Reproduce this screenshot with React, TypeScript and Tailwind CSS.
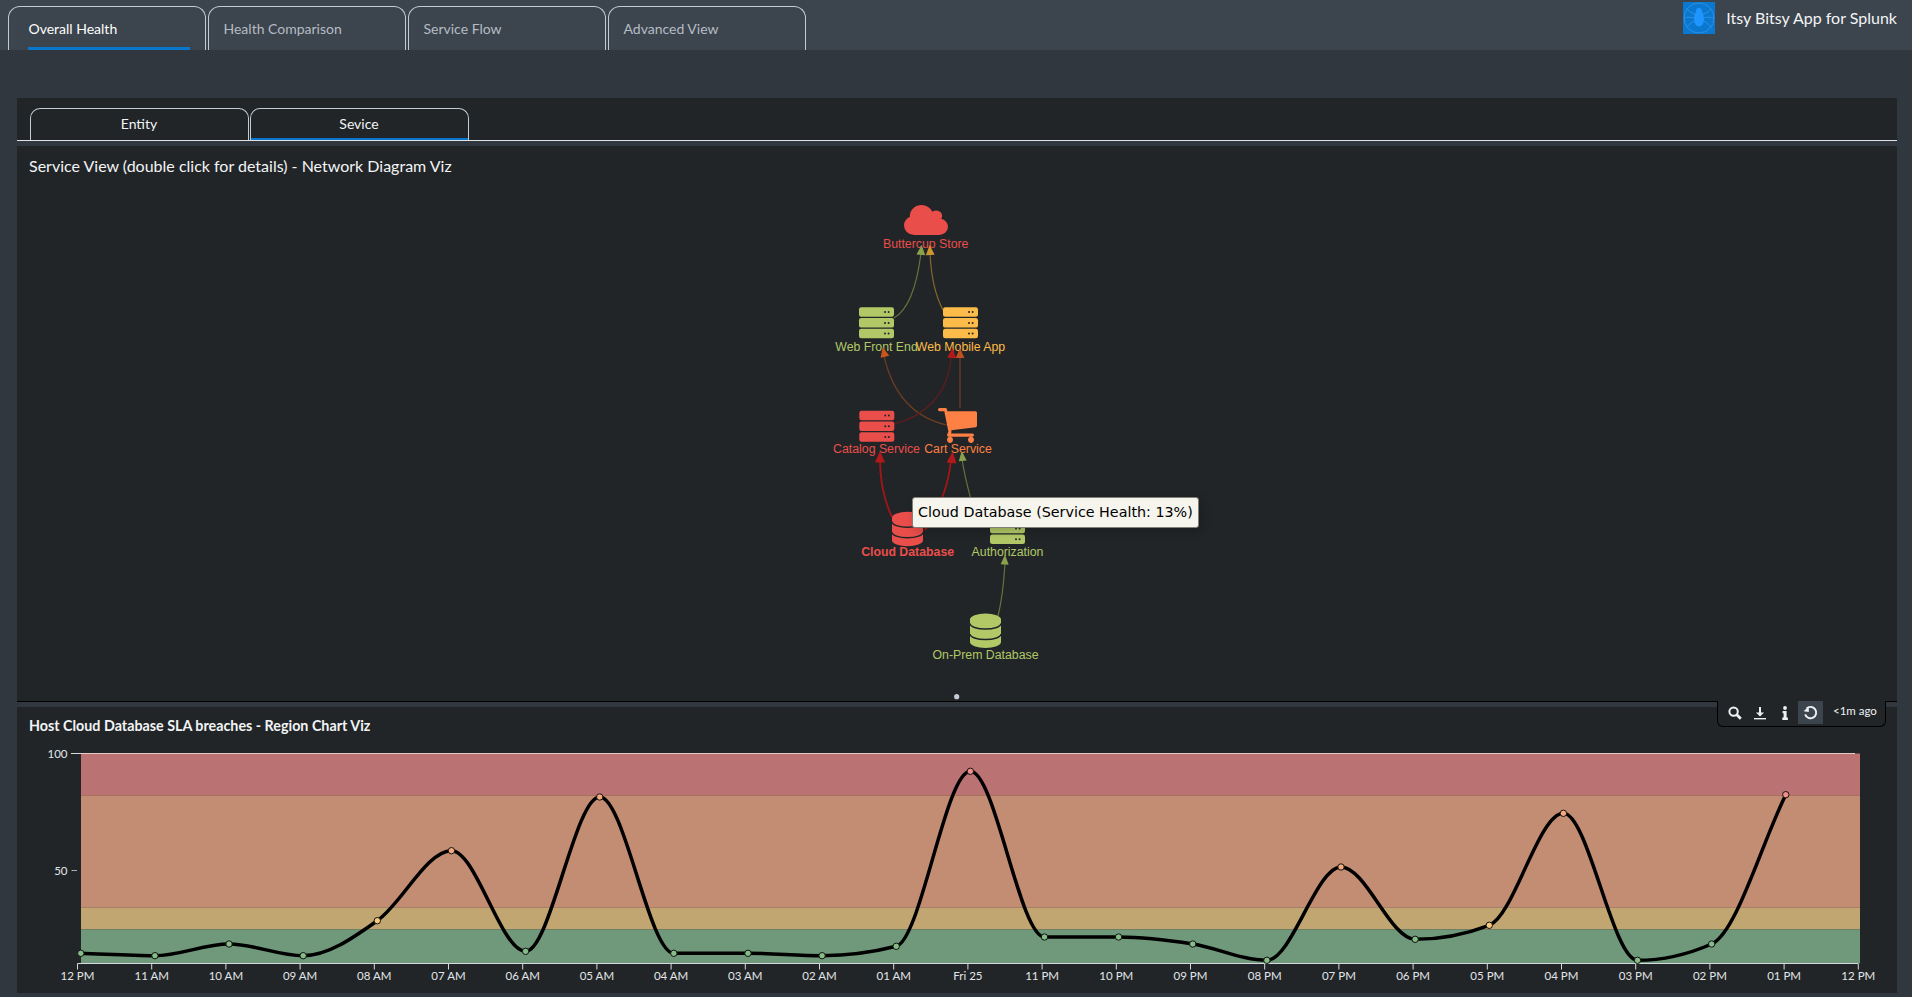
import React from 'react';

const mainTabs = ['Overall Health', 'Health Comparison', 'Service Flow', 'Advanced View'];

const GREEN = '#b2c867';
const AMBER = '#fdbb4a';
const RED = '#e94e4b';
const ORANGE = '#fd8044';

// chart data, y is in page pixels
const hours = ['12 PM', '11 AM', '10 AM', '09 AM', '08 AM', '07 AM', '06 AM', '05 AM', '04 AM', '03 AM', '02 AM', '01 AM', 'Fri 25', '11 PM', '10 PM', '09 PM', '08 PM', '07 PM', '06 PM', '05 PM', '04 PM', '03 PM', '02 PM', '01 PM', '12 PM'];
const points = [953.3, 955.7, 944, 955.7, 920.7, 850.7, 951.3, 797, 953.3, 953.3, 955.7, 946.3, 771.3, 937, 937, 944, 960.3, 867, 939.3, 925.3, 813.3, 960.3, 944, 794.7];

const pointX = (i: number) => 80.8 + 74.13 * i;

const pointColor = (y: number) => {
  if (y < 796) return '#f08f8a';
  if (y < 907) return '#f5a97f';
  if (y < 930) return '#f6c97c';
  return '#86bd86';
};

// monotone x spline, same idea as d3.curveMonotoneX
const splinePath = (ys: number[]) => {
  const h = pointX(1) - pointX(0);
  const slopes = ys.slice(1).map((y, i) => (y - ys[i]) / h);
  const tangents = ys.map((_, i) => {
    if (i === 0) return (3 * slopes[0] - (slopes[0] + slopes[0]) / 2) / 2;
    if (i === ys.length - 1) return slopes[i - 1];
    const a = slopes[i - 1];
    const b = slopes[i];
    if (a * b <= 0) return 0;
    return ((a < 0 ? -1 : 1) * 2) * Math.min(Math.abs(a), Math.abs(b), Math.abs(a + b) / 4);
  });
  let d = `M${pointX(0)} ${ys[0]}`;
  for (let i = 0; i < ys.length - 1; i++) {
    const x0 = pointX(i);
    const x1 = pointX(i + 1);
    d += ` C${x0 + h / 3} ${ys[i] + (tangents[i] * h) / 3} ${x1 - h / 3} ${ys[i + 1] - (tangents[i + 1] * h) / 3} ${x1} ${ys[i + 1]}`;
  }
  return d;
};

const edges = [
  { d: 'M894 318 C908 310 917 285 921 253', line: '#65753a', head: '#8aa24e', tip: [921.7, 245], angle: 5, w: 1.2, hw: 4.4, hh: 10 },
  { d: 'M943 310 C935 295 931 275 930 253', line: '#83672c', head: '#cf962f', tip: [929.7, 245], angle: -3, w: 1.2, hw: 4.4, hh: 10 },
  { d: 'M947 425 C915 418 893 395 884 356', line: '#6f3c24', head: '#c9551f', tip: [882.7, 347], angle: -13, w: 1.2, hw: 4.4, hh: 10 },
  { d: 'M894 424 C925 416 948 395 951 357', line: '#641c1d', head: '#b21a1a', tip: [952.7, 348], angle: 6, w: 1.2, hw: 4.4, hh: 10 },
  { d: 'M960 408 L960 357', line: '#6a3a26', head: '#bf4f20', tip: [960, 348], angle: 0, w: 1.4, hw: 4.4, hh: 10 },
  { d: 'M892 517 C884 500 880 480 880 460', line: '#a31616', head: '#b01a1a', tip: [880, 451], angle: 0, w: 1.8, hw: 5, hh: 11.5 },
  { d: 'M925 530 C938 510 948 490 951 460', line: '#a31616', head: '#b01a1a', tip: [952.7, 451.5], angle: 6, w: 1.8, hw: 5, hh: 11.5 },
  { d: 'M975 515 C970 495 965 480 962 459', line: '#65753a', head: '#8aa24e', tip: [961.7, 451], angle: -6, w: 1.2, hw: 4, hh: 10 },
  { d: 'M998 616 C1002 600 1004 580 1005 563', line: '#65753a', head: '#8aa24e', tip: [1005, 554.5], angle: 2, w: 1.2, hw: 4, hh: 10 },
];

const labels = [
  { text: 'Buttercup Store', x: 925.7, y: 248, fill: RED },
  { text: 'Web Front End', x: 876.5, y: 351, fill: GREEN },
  { text: 'Web Mobile App', x: 960.5, y: 351, fill: AMBER },
  { text: 'Catalog Service', x: 876.5, y: 453, fill: RED },
  { text: 'Cart Service', x: 958, y: 453, fill: ORANGE },
  { text: 'Cloud Database', x: 907.6, y: 556, fill: RED, bold: true },
  { text: 'Authorization', x: 1007.5, y: 556, fill: GREEN },
  { text: 'On-Prem Database', x: 985.5, y: 659, fill: GREEN },
];

const ServerIcon = ({ x, y, fill }: { x: number; y: number; fill: string }) => (
  <g>
    {[0, 10.8, 21.5].map((dy) => (
      <g key={dy}>
        <rect x={x} y={y + dy} width={35} height={9.5} rx={2.2} fill={fill} />
        <circle cx={x + 26} cy={y + dy + 4.8} r={1} fill="#212527" />
        <circle cx={x + 29.6} cy={y + dy + 4.8} r={1} fill="#212527" />
      </g>
    ))}
  </g>
);

const DatabaseIcon = ({ x, y, fill }: { x: number; y: number; fill: string }) => (
  <g>
    <path d={`M${x} ${y + 6} A15.5 6 0 0 1 ${x + 31} ${y + 6} V${y + 28.5} A15.5 6 0 0 1 ${x} ${y + 28.5} Z`} fill={fill} />
    <path d={`M${x} ${y + 10} A15.5 5.5 0 0 0 ${x + 31} ${y + 10}`} fill="none" stroke="#212527" strokeWidth={1.5} />
    <path d={`M${x} ${y + 20.5} A15.5 5.5 0 0 0 ${x + 31} ${y + 20.5}`} fill="none" stroke="#212527" strokeWidth={1.5} />
  </g>
);

const NetworkDiagram = () => (
  <svg viewBox="17 186 1880 515" className="block h-[515px] w-[1880px] font-['Liberation_Sans',Arial,sans-serif]">
    {labels.map((l) => (
      <text key={l.text} x={l.x} y={l.y} fill={l.fill} textAnchor="middle" fontSize={12.3} fontWeight={l.bold ? 700 : 400}>
        {l.text}
      </text>
    ))}
    {edges.map((e) => (
      <g key={e.d}>
        <path d={e.d} fill="none" stroke={e.line} strokeWidth={e.w} />
        <polygon
          points={`${e.tip[0]},${e.tip[1]} ${e.tip[0] - e.hw},${e.tip[1] + e.hh} ${e.tip[0] + e.hw},${e.tip[1] + e.hh}`}
          fill={e.head}
          transform={`rotate(${e.angle} ${e.tip[0]} ${e.tip[1]})`}
        />
      </g>
    ))}
    {/* cloud */}
    <svg x={904} y={205} width={44} height={30} viewBox="0 128 1920 1408" preserveAspectRatio="none">
      <path
        fill={RED}
        d="M1920 1152q0 159-112.5 271.5t-271.5 112.5h-1088q-185 0-316.5-131.5t-131.5-316.5q0-132 71-241.5t187-163.5q-2-28-2-43 0-212 150-362t362-150q158 0 286.5 88t187.5 230q70-62 166-62 106 0 181 75t75 181q0 75-41 138 129 30 213 134.5t84 239.5z"
      />
    </svg>
    <ServerIcon x={859} y={307.3} fill={GREEN} />
    <ServerIcon x={943} y={307.3} fill={AMBER} />
    <ServerIcon x={859.3} y={410.7} fill={RED} />
    {/* cart */}
    <svg x={938} y={408} width={39} height={35} viewBox="64 256 1664 1408" preserveAspectRatio="none">
      <path
        fill={ORANGE}
        d="M704 1536q0 52-38 90t-90 38-90-38-38-90 38-90 90-38 90 38 38 90zm896 0q0 52-38 90t-90 38-90-38-38-90 38-90 90-38 90 38 38 90zm128-1088v512q0 24-16.5 43.5t-40.5 22.5l-1044 122q13 60 13 70 0 16-24 64h920q26 0 45 19t19 45-19 45-45 19h-1024q-26 0-45-19t-19-45q0-11 8-31.5t16-36 21.5-40 15.5-29.5l-177-823h-204q-26 0-45-19t-19-45 19-45 45-19h256q16 0 28.5 6.5t19.5 15.5 13 24.5 8 26 5.5 29.5 4.5 26h1201q26 0 45 19t19 45z"
      />
    </svg>
    <DatabaseIcon x={892} y={511.7} fill={RED} />
    <ServerIcon x={990} y={513} fill={GREEN} />
    <DatabaseIcon x={970} y={613.6} fill={GREEN} />
    <circle cx={956.7} cy={696.7} r={2.6} fill="#c3cbd4" />
  </svg>
);

const RegionChart = () => (
  <svg viewBox="17 743 1880 250" className="block h-[250px] w-[1880px]">
    <rect x={81} y={753.5} width={1779} height={42} fill="#ba7272" />
    <rect x={81} y={795.5} width={1779} height={112} fill="#c28d72" />
    <rect x={81} y={907.5} width={1779} height={22} fill="#c1a672" />
    <rect x={81} y={929.5} width={1779} height={34} fill="#70987a" />
    <line x1={81} x2={1860} y1={795.5} y2={795.5} stroke="#a8705f" />
    <line x1={81} x2={1860} y1={907.5} y2={907.5} stroke="#a8806a" />
    <line x1={81} x2={1855} y1={753.5} y2={753.5} stroke="#e6c8c4" />
    {/* axes */}
    <line x1={71} x2={81} y1={753.5} y2={753.5} stroke="#d5dae0" />
    <line x1={71.5} x2={77} y1={870.5} y2={870.5} stroke="#aab1b8" />
    <text x={67.5} y={757.5} fill="#e1e5e9" fontSize={11.5} textAnchor="end">100</text>
    <text x={67.5} y={874.5} fill="#e1e5e9" fontSize={11.5} textAnchor="end">50</text>
    <line x1={77.5} x2={1858} y1={963.5} y2={963.5} stroke="#d5dae0" />
    {hours.map((h, i) => (
      <g key={i}>
        <line x1={77.5 + 74.2 * i} x2={77.5 + 74.2 * i} y1={963.5} y2={969.5} stroke="#d5dae0" />
        <text x={77.5 + 74.2 * i} y={980} fill="#e1e5e9" fontSize={11.5} textAnchor="middle">{h}</text>
      </g>
    ))}
    {/* line and points */}
    <path d={splinePath(points)} fill="none" stroke="#000000" strokeWidth={3.5} />
    {points.map((y, i) => (
      <circle key={i} cx={pointX(i)} cy={y} r={3.2} fill={pointColor(y)} stroke="#111111" strokeWidth={1} />
    ))}
  </svg>
);

const SpiderLogo = () => (
  <svg viewBox="0 0 32 32" className="h-8 w-8">
    <rect width="32" height="32" fill="#0b78d0" />
    <circle cx="16" cy="16" r="15" fill="none" stroke="#2b90e6" strokeWidth="1" />
    <g fill="none" stroke="#2b90e6" strokeWidth="1">
      <path d="M12 12 C8 11 5 9 4 6" />
      <path d="M20 12 C24 11 27 9 28 6" />
      <path d="M12 16 C8 15 4 15 1.5 16" />
      <path d="M20 16 C24 15 28 15 30.5 16" />
      <path d="M12 19 C8 20 5 23 4 26" />
      <path d="M20 19 C24 20 27 23 28 26" />
    </g>
    <circle cx="16" cy="9" r="3" fill="#1e96ff" />
    <ellipse cx="16" cy="16.5" rx="5" ry="8" fill="#1e96ff" />
  </svg>
);

const ToolbarIcons = () => (
  <div className="flex items-center">
    <div className="flex h-[23px] w-[25px] items-center justify-center">
      <svg viewBox="0 0 14 14" className="h-[14px] w-[14px]" fill="none" stroke="#eef1f4">
        <circle cx="5.6" cy="5.6" r="4.2" strokeWidth="2" />
        <path d="M8.8 8.8 L12.8 12.8" strokeWidth="2.8" />
      </svg>
    </div>
    <div className="flex h-[23px] w-[25px] items-center justify-center">
      <svg viewBox="0 0 14 14" className="h-[14px] w-[14px]" fill="#eef1f4">
        <path d="M6 1h2v5.5h3L7 10.5 3 6.5h3z" />
        <rect x="1" y="12" width="12" height="1.4" />
      </svg>
    </div>
    <div className="flex h-[23px] w-[25px] items-center justify-center">
      <svg viewBox="0 0 14 14" className="h-[14px] w-[14px]" fill="#eef1f4">
        <circle cx="7" cy="2" r="1.9" />
        <path d="M4.6 5h4v6.6h1.3V14H4.3v-2.4h1.3V7.3h-1z" />
      </svg>
    </div>
    <div className="flex h-[23px] w-[25px] items-center justify-center bg-[#3c444d]">
      <svg viewBox="0 0 14 14" className="h-[15px] w-[15px]" fill="none" stroke="#eef1f4" strokeWidth="1.8">
        <path d="M3.4 3.2 A5.3 5.3 0 1 1 2 8.8" />
        <path d="M0.6 5.8 L5.4 1.2 V6.6 Z" fill="#eef1f4" stroke="none" />
      </svg>
    </div>
  </div>
);

export default function App() {
  return (
    <div className="h-[997px] w-[1912px] overflow-hidden bg-[#31373e] font-[Lato,sans-serif]">
      {/* Top nav */}
      <div className="flex h-[50px] items-end justify-between bg-[#3c444d] pl-[7.5px] pr-[15px]">
        <div className="flex gap-[1.5px]">
          {mainTabs.map((tab, i) => (
            <div
              key={tab}
              className={`relative h-[44px] w-[198.5px] rounded-t-[12px] border border-b-0 border-[#c3cbd4] pt-[13px] text-[14px] leading-[17px] ${i === 0 ? 'pl-[20px] text-white' : 'pl-[15px] text-[#b5bcc4]'}`}
            >
              {tab}
              {i === 0 && <div className="absolute bottom-0 left-[19px] h-[3px] w-[162px] bg-[#0877cc]" />}
            </div>
          ))}
        </div>
        <div className="mb-[16px] flex items-center gap-[11px]">
          <SpiderLogo />
          <span className="text-[16px] leading-5 text-[#f2f4f6]">Itsy Bitsy App for Splunk</span>
        </div>
      </div>

      {/* Sub tabs */}
      <div className="ml-[17px] mt-[48px] w-[1880px] bg-[#212527]">
        <div className="flex h-[43px] items-end gap-[1px] border-b-[1.5px] border-[#dfe3e7] pl-[12.5px]">
          <div className="flex h-[32px] w-[219px] items-center justify-center rounded-t-[10px] border border-b-0 border-[#c3cbd4] pb-[2px] text-[14px] text-[#f2f4f6]">
            Entity
          </div>
          <div className="flex h-[32px] w-[219px] items-center justify-center rounded-t-[10px] border border-b-0 border-[#c3cbd4] pb-[2px] text-[14px] text-[#f2f4f6] shadow-[inset_0_-2px_0_#0877cc]">
            Sevice
          </div>
        </div>
      </div>

      {/* Network diagram panel */}
      <div className="relative ml-[17px] mt-[5px] w-[1880px] border-b border-black bg-[#212527]">
        <div className="h-[40px] pl-[12px] pt-[10px] text-[16px] leading-5 text-[#f2f4f6]">
          Service View (double click for details) - Network Diagram Viz
        </div>
        <NetworkDiagram />
        <div className="absolute left-[895px] top-[351px] rounded-[3px] border border-[#808074] bg-[#f5f4ed] px-[5px] py-[5px] font-['DejaVu_Sans',sans-serif] text-[14.3px] leading-[19px] whitespace-nowrap text-black shadow-[3px_3px_10px_rgba(0,0,0,0.2)]">
          Cloud Database (Service Health: 13%)
        </div>
      </div>

      {/* Region chart panel */}
      <div className="relative ml-[17px] mt-[5px] w-[1880px] bg-[#212527]">
        <div className="h-[36px] pl-[12px] pt-[9.5px] text-[14.3px] font-bold leading-[18px] text-[#f2f4f6]">
          Host Cloud Database SLA breaches - Region Chart Viz
        </div>
        <RegionChart />
        <div className="absolute right-[11px] top-[-6px] flex h-[26px] w-[169px] items-start rounded-b-[6px] border border-t-0 border-black bg-[#212527] pl-[4.5px]">
          <ToolbarIcons />
          <span className="ml-[10.5px] text-[11.5px] leading-[20px] text-[#eef1f4]">&lt;1m ago</span>
        </div>
      </div>
    </div>
  );
}
